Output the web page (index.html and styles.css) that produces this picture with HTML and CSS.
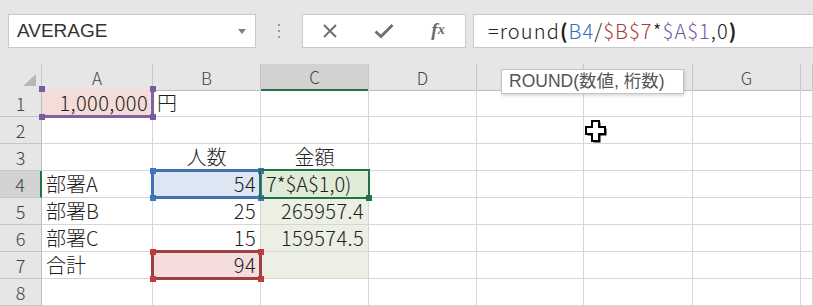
FILE: index.html
```html
<!DOCTYPE html>
<html lang="ja">
<head>
    <meta charset="UTF-8">
    <title>Excel ROUND</title>
    <link rel="stylesheet" href="styles.css">
</head>
<body>
    <div class="app">
        <!-- Name box + formula bar -->
        <div class="toolbar">
            <div class="name-box">
                <span>AVERAGE</span>
                <span class="drop"></span>
            </div>
            <div class="grip"><i></i><i></i><i></i></div>
            <div class="fx-buttons">
                <span class="btn">
                    <svg width="16" height="16" viewBox="0 0 16 16"><path d="M2 2L14 14M14 2L2 14" stroke="#707070" stroke-width="2" fill="none"/></svg>
                </span>
                <span class="btn">
                    <svg width="20" height="16" viewBox="0 0 20 16"><path d="M1.5 8.5L7 13.5L18.5 2" stroke="#707070" stroke-width="3" fill="none"/></svg>
                </span>
                <span class="btn fx">f<small>x</small></span>
            </div>
            <div class="formula">=round<b>(</b><span class="c-blue">B4</span>/<span class="c-red">$B$7</span>*<span class="c-purple">$A$1</span>,0<b>)</b></div>
        </div>

        <!-- Sheet -->
        <div class="sheet">
            <div class="row head">
                <div class="corner"><span class="tri"></span></div>
                <div class="ch">A</div><div class="ch">B</div><div class="ch sel">C</div><div class="ch">D</div>
                <div class="ch"></div><div class="ch"></div><div class="ch">G</div><div class="ch"></div>
            </div>
            <div class="row first">
                <div class="rh">1</div>
                <div class="c num ref ref-purple">1,000,000</div>
                <div class="c">円</div>
                <div class="c"></div><div class="c"></div><div class="c"></div><div class="c"></div><div class="c"></div><div class="c"></div>
            </div>
            <div class="row">
                <div class="rh">2</div>
                <div class="c"></div><div class="c"></div><div class="c"></div><div class="c"></div>
                <div class="c"></div><div class="c"></div><div class="c"></div><div class="c"></div>
            </div>
            <div class="row">
                <div class="rh">3</div>
                <div class="c"></div>
                <div class="c mid">人数</div>
                <div class="c mid">金額</div>
                <div class="c"></div><div class="c"></div><div class="c"></div><div class="c"></div><div class="c"></div>
            </div>
            <div class="row">
                <div class="rh sel">4</div>
                <div class="c">部署A</div>
                <div class="c num ref ref-blue">54</div>
                <div class="c active">7*$A$1,0)</div>
                <div class="c"></div><div class="c"></div><div class="c"></div><div class="c"></div><div class="c"></div>
            </div>
            <div class="row">
                <div class="rh">5</div>
                <div class="c">部署B</div>
                <div class="c num">25</div>
                <div class="c num range">265957.4</div>
                <div class="c"></div><div class="c"></div><div class="c"></div><div class="c"></div><div class="c"></div>
            </div>
            <div class="row">
                <div class="rh">6</div>
                <div class="c">部署C</div>
                <div class="c num">15</div>
                <div class="c num range">159574.5</div>
                <div class="c"></div><div class="c"></div><div class="c"></div><div class="c"></div><div class="c"></div>
            </div>
            <div class="row">
                <div class="rh">7</div>
                <div class="c">合計</div>
                <div class="c num ref ref-red">94</div>
                <div class="c range"></div>
                <div class="c"></div><div class="c"></div><div class="c"></div><div class="c"></div><div class="c"></div>
            </div>
            <div class="row">
                <div class="rh">8</div>
                <div class="c"></div><div class="c"></div><div class="c"></div><div class="c"></div>
                <div class="c"></div><div class="c"></div><div class="c"></div><div class="c"></div>
            </div>
        </div>

        <div class="tooltip">ROUND(数値, 桁数)</div>

        <svg class="cursor" width="26" height="26" viewBox="0 0 26 26">
            <path d="M9 3h7v6h6v7h-6v7H9v-7H3V9h6z" fill="#000" transform="translate(1.5 1.5)"/>
            <path d="M9 3h7v6h6v7h-6v7H9v-7H3V9h6z" fill="#fff" stroke="#000" stroke-width="2"/>
        </svg>
    </div>
</body>
</html>
```

FILE: styles.css
```css
body {
    margin: 0;
    overflow: hidden;
    background-color: #fff;
}
.app {
    position: relative;
    width: 813px;
    height: 306px;
    overflow: hidden;
    font-family: "Noto Sans CJK JP", "Liberation Sans", sans-serif;
    color: #1e1e1e;
}

/* toolbar */
.toolbar {
    height: 64px;
    box-sizing: border-box;
    padding: 14px 0 0 8px;
    background-color: #e6e6e6;
    display: flex;
    align-items: flex-start;
}
.name-box {
    width: 248px;
    height: 34px;
    box-sizing: border-box;
    border: 1px solid #c9c9c9;
    background-color: #fff;
    display: flex;
    align-items: center;
    justify-content: space-between;
    padding: 0 9px 0 8px;
    font-family: "Liberation Sans", Arial, sans-serif;
    font-size: 19px;
    color: #333;
}
.drop {
    width: 0;
    height: 0;
    border-left: 4px solid transparent;
    border-right: 4px solid transparent;
    border-top: 5px solid #808080;
}
.grip {
    width: 46px;
    height: 34px;
    display: flex;
    flex-direction: column;
    align-items: center;
    justify-content: center;
    gap: 4px;
}
.grip i {
    width: 2px;
    height: 2px;
    background-color: #9a9a9a;
}
.fx-buttons {
    width: 164px;
    height: 34px;
    box-sizing: border-box;
    border: 1px solid #c9c9c9;
    background-color: #fff;
    display: flex;
    margin-right: 7px;
}
.btn {
    flex: 1;
    display: flex;
    align-items: center;
    justify-content: center;
}
.fx {
    font-family: "Liberation Serif", serif;
    font-style: italic;
    font-weight: 700;
    font-size: 19px;
    color: #6a6a6a;
    padding-bottom: 2px;
}
.fx small {
    font-size: 14px;
}
.formula {
    flex: 1;
    height: 34px;
    box-sizing: border-box;
    border: 1px solid #c9c9c9;
    border-right: none;
    background-color: #fff;
    padding-left: 14px;
    line-height: 31px;
    font-size: 20px;
    font-weight: 300;
    letter-spacing: 1.1px;
    color: #222;
    white-space: nowrap;
}
.formula b {
    font-weight: 700;
}
.c-blue { color: #3b6db5; }
.c-red { color: #a83c3c; }
.c-purple { color: #7a55a3; }

/* sheet */
.row {
    display: grid;
    grid-template-columns: 42px 111px 108px 108px 108px 107px 109px 108px 12px;
    height: 27px;
}
.row.head {
    height: 25px;
}
.row.first {
    height: 28px;
}
.corner, .ch, .rh {
    background-color: #e6e6e6;
    box-sizing: border-box;
    color: #444;
    display: flex;
    align-items: center;
    justify-content: center;
    font-weight: 300;
}
.corner {
    border-right: 1px solid #c6c6c6;
    border-bottom: 1px solid #bdbdbd;
    justify-content: flex-end;
    align-items: flex-end;
    padding: 0 5px 4px 0;
}
.tri {
    width: 13px;
    height: 12px;
    background-color: #b8b8b8;
    clip-path: polygon(100% 0, 100% 100%, 0 100%);
}
.ch {
    border-right: 1px solid #c6c6c6;
    border-bottom: 1px solid #bdbdbd;
    font-size: 17px;
}
.ch.sel {
    background-color: #d2d2d2;
    border-bottom: 2px solid #217346;
}
.rh {
    border-right: 1px solid #bdbdbd;
    border-bottom: 1px solid #c6c6c6;
    font-size: 18px;
}
.rh.sel {
    background-color: #d2d2d2;
    border-right: 2px solid #217346;
}
.c {
    box-sizing: border-box;
    border-right: 1px solid #d6d6d6;
    border-bottom: 1px solid #d6d6d6;
    font-size: 20px;
    font-weight: 300;
    line-height: 20px;
    display: flex;
    align-items: flex-end;
    padding: 0 4px 3px 4px;
    white-space: nowrap;
}
.c.num {
    justify-content: flex-end;
    letter-spacing: 0.4px;
}
.c.mid {
    justify-content: center;
}
.c.range {
    background-color: #ecf0e4;
}

/* reference boxes drawn over the grid */
.ref, .active {
    position: relative;
}
.ref::before, .ref::after, .active::before, .active::after {
    content: "";
    position: absolute;
    z-index: 2;
    pointer-events: none;
}
.ref::before {
    top: -2px;
    left: -2px;
    right: -2px;
    bottom: -2px;
    box-sizing: border-box;
    border: 3px solid var(--line);
}
.ref::after {
    top: -3px;
    left: -3px;
    right: -4px;
    bottom: -4px;
    background:
        linear-gradient(var(--dot), var(--dot)) left top / 6px 6px no-repeat,
        linear-gradient(var(--dot), var(--dot)) right top / 6px 6px no-repeat,
        linear-gradient(var(--dot), var(--dot)) left bottom / 6px 6px no-repeat,
        linear-gradient(var(--dot), var(--dot)) right bottom / 6px 6px no-repeat;
}
.ref-purple {
    --line: #7e62a4;
    --dot: #7a5aa0;
    background-color: #f4ddd8;
}
.ref-purple::before {
    border-top-color: transparent;
    border-left-color: transparent;
}
.ref-blue {
    --line: #4271b4;
    --dot: #3f74c2;
    background-color: #dde7f4;
}
.ref-red {
    --line: #9c4040;
    --dot: #c03b3b;
    background-color: #f5dddd;
}
.active {
    background-color: #e1ecd8;
    justify-content: flex-start;
    padding-left: 5px;
}
.active::before {
    top: -2px;
    left: -2px;
    right: -2px;
    bottom: -2px;
    border: 2px solid #217346;
}
.active::after {
    right: -4px;
    bottom: -4px;
    width: 6px;
    height: 6px;
    background-color: #217346;
}

/* overlays */
.tooltip {
    position: absolute;
    left: 501px;
    top: 69px;
    z-index: 5;
    width: 183px;
    height: 25px;
    box-sizing: border-box;
    padding: 0 7px;
    background-color: #fff;
    border: 1px solid #c4c4c4;
    box-shadow: 1px 2px 3px rgba(0, 0, 0, 0.15);
    font-family: "Liberation Sans", "Noto Sans CJK JP", sans-serif;
    font-size: 17.5px;
    line-height: 23px;
    color: #555;
    white-space: nowrap;
}
.cursor {
    position: absolute;
    left: 583px;
    top: 118px;
    z-index: 5;
}
```
